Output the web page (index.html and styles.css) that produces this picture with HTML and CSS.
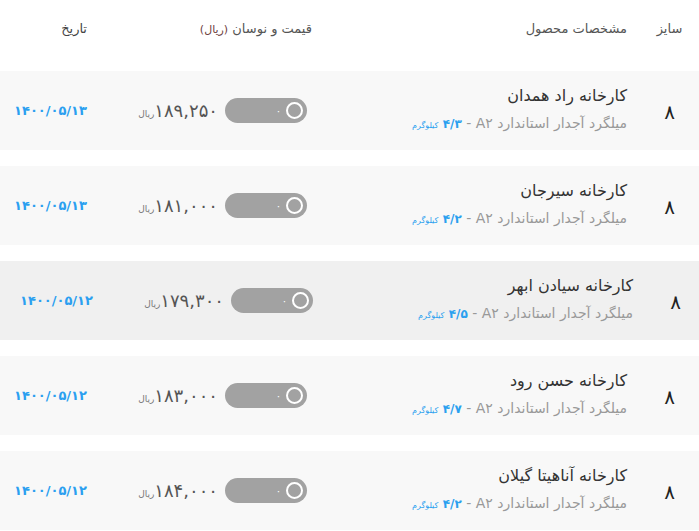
FILE: index.html
```html
<!DOCTYPE html>
<html lang="fa" dir="rtl">
<head>
<meta charset="utf-8">
<title>قیمت میلگرد</title>
<link rel="stylesheet" href="styles.css">
</head>
<body>
<div class="table">
  <div class="head">
    <div class="c-size">سایز</div>
    <div class="c-product">مشخصات محصول</div>
    <div class="c-price head-price">قیمت و نوسان <span class="unit-h">(ریال)</span></div>
    <div class="c-date head-date">تاریخ</div>
  </div>

  <div class="row">
    <div class="inner">
      <div class="c-size size">۸</div>
      <div class="c-product">
        <div class="title">کارخانه راد همدان</div>
        <div class="sub">میلگرد آجدار استاندارد A۲ - <span class="weight"><b>۴/۳</b> <small>کیلوگرم</small></span></div>
      </div>
      <div class="c-price">
        <div class="toggle"><span class="knob"></span><span class="zero">۰</span></div>
        <div class="price">۱۸۹,۲۵۰<small>ریال</small></div>
      </div>
      <div class="c-date date">۱۴۰۰/۰۵/۱۳</div>
    </div>
  </div>

  <div class="row">
    <div class="inner">
      <div class="c-size size">۸</div>
      <div class="c-product">
        <div class="title">کارخانه سیرجان</div>
        <div class="sub">میلگرد آجدار استاندارد A۲ - <span class="weight"><b>۴/۲</b> <small>کیلوگرم</small></span></div>
      </div>
      <div class="c-price">
        <div class="toggle"><span class="knob"></span><span class="zero">۰</span></div>
        <div class="price">۱۸۱,۰۰۰<small>ریال</small></div>
      </div>
      <div class="c-date date">۱۴۰۰/۰۵/۱۳</div>
    </div>
  </div>

  <div class="row row-hover">
    <div class="inner">
      <div class="c-size size">۸</div>
      <div class="c-product">
        <div class="title">کارخانه سیادن ابهر</div>
        <div class="sub">میلگرد آجدار استاندارد A۲ - <span class="weight"><b>۴/۵</b> <small>کیلوگرم</small></span></div>
      </div>
      <div class="c-price">
        <div class="toggle"><span class="knob"></span><span class="zero">۰</span></div>
        <div class="price">۱۷۹,۳۰۰<small>ریال</small></div>
      </div>
      <div class="c-date date">۱۴۰۰/۰۵/۱۲</div>
    </div>
  </div>

  <div class="row">
    <div class="inner">
      <div class="c-size size">۸</div>
      <div class="c-product">
        <div class="title">کارخانه حسن رود</div>
        <div class="sub">میلگرد آجدار استاندارد A۲ - <span class="weight"><b>۴/۷</b> <small>کیلوگرم</small></span></div>
      </div>
      <div class="c-price">
        <div class="toggle"><span class="knob"></span><span class="zero">۰</span></div>
        <div class="price">۱۸۳,۰۰۰<small>ریال</small></div>
      </div>
      <div class="c-date date">۱۴۰۰/۰۵/۱۲</div>
    </div>
  </div>

  <div class="row">
    <div class="inner">
      <div class="c-size size">۸</div>
      <div class="c-product">
        <div class="title">کارخانه آناهیتا گیلان</div>
        <div class="sub">میلگرد آجدار استاندارد A۲ - <span class="weight"><b>۴/۲</b> <small>کیلوگرم</small></span></div>
      </div>
      <div class="c-price">
        <div class="toggle"><span class="knob"></span><span class="zero">۰</span></div>
        <div class="price">۱۸۴,۰۰۰<small>ریال</small></div>
      </div>
      <div class="c-date date">۱۴۰۰/۰۵/۱۲</div>
    </div>
  </div>
</div>
</body>
</html>
```

FILE: styles.css
```css
* { box-sizing: border-box; }
html, body {
  margin: 0;
  padding: 0;
  background: #ffffff;
}
body {
  direction: rtl;
  font-family: "DejaVu Sans", "Noto Sans", sans-serif;
  color: #333;
  overflow: hidden;
}
.table { width: 699px; }

.head {
  display: flex;
  align-items: center;
  height: 56px;
  margin-bottom: 15px;
  font-size: 13px;
  color: #555;
}
.head .head-price { padding-right: 8px; }
.unit-h { color: #6d3d3d; font-size: 11px; }
.head-date { color: #444; }

.c-size { width: 59px; text-align: center; flex: none; }
.c-product { width: 320px; padding-right: 13px; flex: none; }
.c-price { width: 220px; padding-right: 13px; flex: none; display: flex; align-items: center; gap: 7px; }
.head .c-price { display: block; }
.c-date { flex: 1; padding-right: 13px; }

.row {
  height: 79px;
  margin-bottom: 16px;
  background: #f8f8f8;
}
.row-hover { background: #f0f0f0; }
.inner {
  display: flex;
  align-items: center;
  height: 100%;
}
.row-hover .inner { transform: translateX(6px); }

.size {
  font-size: 20px;
  color: #222;
  padding-top: 2px;
}
.title {
  font-size: 16px;
  color: #333;
  line-height: 24px;
  margin-top: 0;
}
.sub {
  font-size: 14px;
  color: #999;
  line-height: 22px;
  margin-top: 4px;
}
.weight {
  unicode-bidi: isolate;
  color: #2aa0ef;
}
.weight b { font-size: 12px; }
.weight small { font-size: 8px; }

.toggle {
  width: 82px;
  height: 25px;
  border-radius: 13px;
  background: #a2a2a2;
  display: flex;
  align-items: center;
  padding-right: 4px;
  flex: none;
}
.knob {
  width: 17px;
  height: 17px;
  border-radius: 50%;
  border: 2.5px solid #fff;
}
.zero {
  color: #fff;
  font-size: 10px;
  margin-right: 5px;
}
.price {
  font-size: 18px;
  color: #555;
  white-space: nowrap;
}
.price small {
  font-size: 9px;
  color: #777;
}
.date {
  font-size: 13px;
  font-weight: bold;
  color: #2b9ff0;
}
```
